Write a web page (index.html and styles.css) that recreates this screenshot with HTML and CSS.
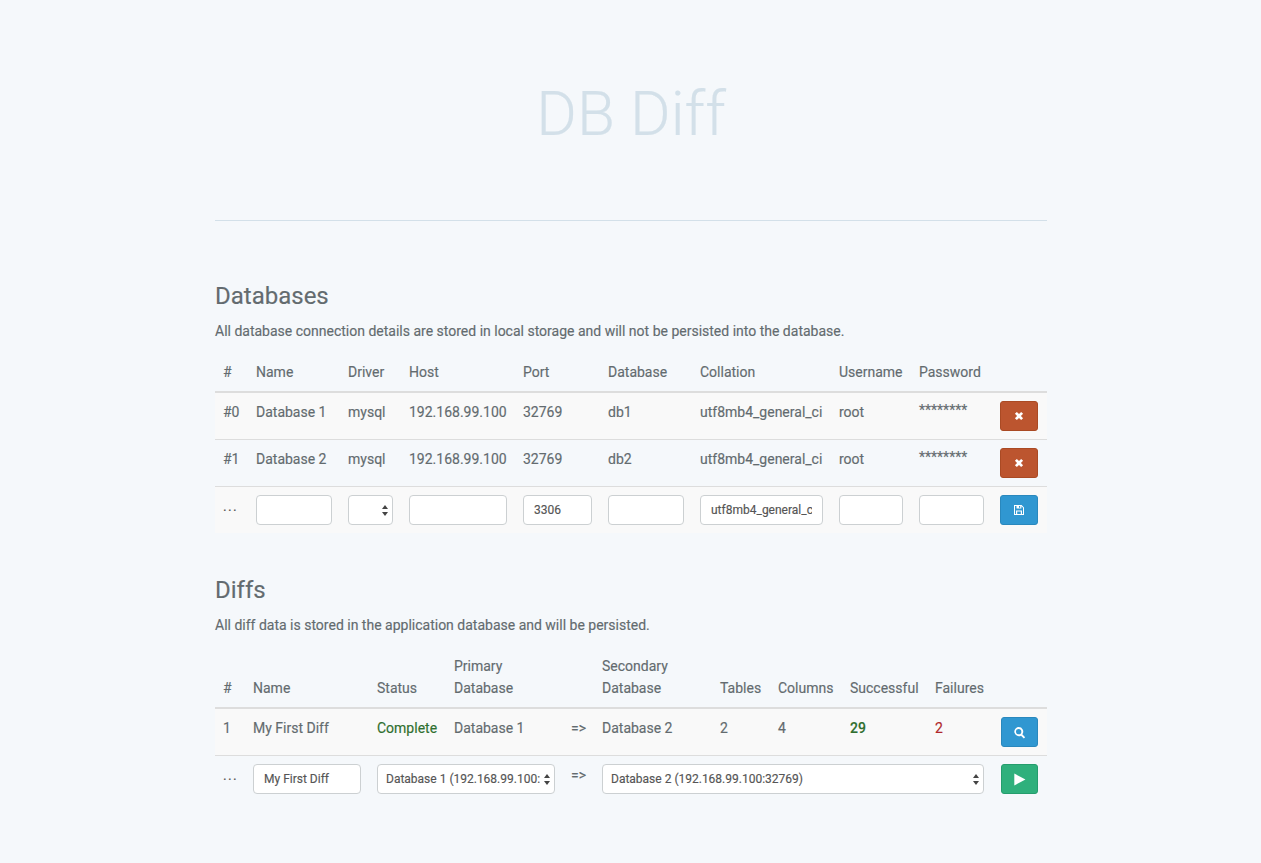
FILE: index.html
```html
<!DOCTYPE html>
<html lang="en">
<head>
<meta charset="utf-8">
<title>DB Diff</title>
<link rel="stylesheet" href="styles.css">
</head>
<body>
<main class="container">
  <header class="masthead"><h1 class="title">DB Diff</h1></header>

  <section class="section section-databases">
    <h2 class="heading">Databases</h2>
    <p class="lead">All database connection details are stored in local storage and will not be persisted into the database.</p>
    <table class="grid grid-db">
      <colgroup>
        <col class="c33"><col class="c92"><col class="c61"><col class="c114"><col class="c85"><col class="c92"><col class="c139"><col class="c80"><col class="c81"><col class="c55">
      </colgroup>
      <thead>
        <tr><th>#</th><th>Name</th><th>Driver</th><th>Host</th><th>Port</th><th>Database</th><th>Collation</th><th>Username</th><th>Password</th><th></th></tr>
      </thead>
      <tbody>
        <tr class="striped">
          <td>#0</td><td>Database 1</td><td>mysql</td><td>192.168.99.100</td><td>32769</td><td>db1</td><td>utf8mb4_general_ci</td><td>root</td><td class="pw">********</td>
          <td><button class="btn btn-red" type="button" aria-label="Delete"><svg class="ico" viewBox="0 0 10 10"><path d="M1.6 3.2 3.2 1.6 5 3.4 6.8 1.6 8.4 3.2 6.6 5 8.4 6.8 6.8 8.4 5 6.6 3.2 8.4 1.6 6.8 3.4 5Z"/></svg></button></td>
        </tr>
        <tr>
          <td>#1</td><td>Database 2</td><td>mysql</td><td>192.168.99.100</td><td>32769</td><td>db2</td><td>utf8mb4_general_ci</td><td>root</td><td class="pw">********</td>
          <td><button class="btn btn-red" type="button" aria-label="Delete"><svg class="ico" viewBox="0 0 10 10"><path d="M1.6 3.2 3.2 1.6 5 3.4 6.8 1.6 8.4 3.2 6.6 5 8.4 6.8 6.8 8.4 5 6.6 3.2 8.4 1.6 6.8 3.4 5Z"/></svg></button></td>
        </tr>
        <tr class="striped form-row">
          <td class="dots">...</td>
          <td><input class="field" type="text"></td>
          <td><span class="select-wrap"><select class="field field-select"><option></option><option>mysql</option></select><svg class="arrows" viewBox="0 0 6 11"><path d="M3 0 6 4H0ZM3 11 0 7H6Z"/></svg></span></td>
          <td><input class="field" type="text"></td>
          <td><input class="field" type="text" value="3306"></td>
          <td><input class="field" type="text"></td>
          <td><input class="field" type="text" value="utf8mb4_general_ci"></td>
          <td><input class="field" type="text"></td>
          <td><input class="field" type="password"></td>
          <td><button class="btn btn-blue" type="button" aria-label="Save"><svg class="ico" viewBox="0 0 12 12"><path fill-rule="evenodd" d="M1 1H8.6L11 3.4V11H1ZM2 2V10H3V6.5H9V10H10V3.8L8.4 2.2V4.5H3.5V2ZM4.2 7.5V10H7.8V7.5ZM6 2V3.7H7.2V2Z"/></svg></button></td>
        </tr>
      </tbody>
    </table>
  </section>

  <section class="section section-diffs">
    <h2 class="heading">Diffs</h2>
    <p class="lead">All diff data is stored in the application database and will be persisted.</p>
    <table class="grid grid-diff">
      <colgroup>
        <col class="c30"><col class="c124"><col class="c77"><col class="c117"><col class="c31"><col class="c118"><col class="c58"><col class="c72"><col class="c85"><col class="c65"><col class="c55">
      </colgroup>
      <thead>
        <tr><th>#</th><th>Name</th><th>Status</th><th>Primary Database</th><th></th><th>Secondary Database</th><th>Tables</th><th>Columns</th><th>Successful</th><th>Failures</th><th></th></tr>
      </thead>
      <tbody>
        <tr class="striped">
          <td>1</td><td>My First Diff</td><td class="ok">Complete</td><td>Database 1</td><td class="arrow">=&gt;</td><td>Database 2</td><td>2</td><td>4</td><td class="ok strong">29</td><td class="bad">2</td>
          <td class="btn-cell"><button class="btn btn-blue" type="button" aria-label="View"><svg class="ico ico-lg" viewBox="0 0 12 12"><path d="M5.2 1a4.2 4.2 0 0 1 3.4 6.7L11.2 10.3 10 11.5 7.4 8.9A4.2 4.2 0 1 1 5.2 1ZM5.2 2.7a2.5 2.5 0 1 0 0 5 2.5 2.5 0 0 0 0-5Z" fill-rule="evenodd"/></svg></button></td>
        </tr>
        <tr class="form-row">
          <td class="dots">...</td>
          <td><input class="field" type="text" value="My First Diff"></td>
          <td colspan="2"><span class="select-wrap"><select class="field field-select"><option>Database 1 (192.168.99.100:32769)</option><option>Database 2 (192.168.99.100:32769)</option></select><svg class="arrows" viewBox="0 0 6 11"><path d="M3 0 6 4H0ZM3 11 0 7H6Z"/></svg></span></td>
          <td class="arrow">=&gt;</td>
          <td colspan="5"><span class="select-wrap"><select class="field field-select"><option>Database 2 (192.168.99.100:32769)</option><option>Database 1 (192.168.99.100:32769)</option></select><svg class="arrows" viewBox="0 0 6 11"><path d="M3 0 6 4H0ZM3 11 0 7H6Z"/></svg></span></td>
          <td class="btn-cell"><button class="btn btn-green" type="button" aria-label="Run"><svg class="ico ico-lg" viewBox="0 0 12 12"><path d="M1.2 .5 11.5 6 1.2 11.5Z"/></svg></button></td>
        </tr>
      </tbody>
    </table>
  </section>
</main>
</body>
</html>
```

FILE: styles.css
```css
* { box-sizing: border-box; }

html, body { height: 100%; }

body {
  margin: 0;
  background: #f5f8fb;
  color: #636b6f;
  font-family: Roboto, "Liberation Sans", sans-serif;
  font-size: 14px;
  line-height: 22px;
  -webkit-text-stroke: 0.15px currentColor;
}

.container {
  width: 832px;
  margin: 0 0 0 215px;
}

.masthead {
  height: 221px;
  padding-top: 76px;
  border-bottom: 1px solid #d3e0e9;
  text-align: center;
}

.title {
  margin: 0;
  color: #d3e0e9;
  font-size: 62px;
  font-weight: 300;
  line-height: 75px;
}

.section-databases { padding-top: 61px; }
.section-diffs { padding-top: 43px; }

.heading {
  margin: 0;
  font-size: 24px;
  font-weight: 400;
  line-height: 28px;
}

.lead {
  margin: 10px 0 11px;
  line-height: 22px;
}

.grid {
  width: 100%;
  table-layout: fixed;
  border-collapse: collapse;
  border-spacing: 0;
}

.grid th {
  padding: 8px;
  border-bottom: 2px solid #ddd;
  font-weight: 400;
  text-align: left;
  vertical-align: bottom;
}

.grid td {
  padding: 8px;
  border-top: 1px solid #ddd;
  vertical-align: top;
  line-height: 22px;
}

.grid thead + tbody tr:first-child td { border-top: 0; }

.striped { background: #f9f9f9; }

.grid td.pw { line-height: 18px; }

.dots { letter-spacing: 1.3px; color: #555; }

.arrow { font-size: 14px; }
.grid .form-row .arrow { padding-top: 8px; }

.ok { color: #2f6f2f; }
.strong { font-weight: 500; }
.bad { color: #b0272b; }

.field {
  display: block;
  width: 100%;
  height: 30px;
  padding: 0 10px;
  border: 1px solid #ccd0d2;
  border-radius: 4px;
  background: #fff;
  color: #555;
  font-family: Roboto, "Liberation Sans", sans-serif;
  font-size: 12px;
  line-height: 28px;
}

.select-wrap {
  display: block;
  position: relative;
}

.field-select {
  appearance: none;
  padding: 0 14px 0 8px;
}

.arrows {
  position: absolute;
  top: 10px;
  right: 5px;
  width: 6px;
  height: 11px;
  fill: #444;
  pointer-events: none;
}

.btn {
  display: flex;
  align-items: center;
  justify-content: center;
  width: 38px;
  height: 30px;
  padding: 0;
  border: 1px solid transparent;
  border-radius: 3px;
}

.btn-cell .btn { width: 37px; margin-left: 1px; }

.btn-red { background: #bc552f; border-color: #aa4a24; }
.btn-blue { background: #3097d1; border-color: #2a88bd; }
.btn-green { background: #2fb07c; border-color: #259d6d; }

.ico {
  display: block;
  width: 12px;
  height: 12px;
  fill: #fff;
}

.ico-lg {
  width: 13px;
  height: 13px;
}

.c30 { width: 30px; }
.c31 { width: 31px; }
.c33 { width: 33px; }
.c55 { width: 55px; }
.c58 { width: 58px; }
.c61 { width: 61px; }
.c65 { width: 65px; }
.c72 { width: 72px; }
.c77 { width: 77px; }
.c80 { width: 80px; }
.c81 { width: 81px; }
.c85 { width: 85px; }
.c92 { width: 92px; }
.c114 { width: 114px; }
.c117 { width: 117px; }
.c118 { width: 118px; }
.c124 { width: 124px; }
.c139 { width: 139px; }
```
